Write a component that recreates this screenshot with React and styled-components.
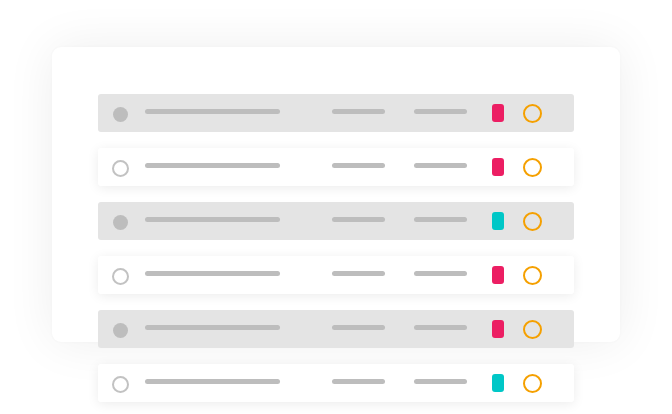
import React from 'react'
import styled, { createGlobalStyle } from 'styled-components'

const rows = [
    { filled: true, tag: '#ec1e63' },
    { filled: false, tag: '#ec1e63' },
    { filled: true, tag: '#00c7c7' },
    { filled: false, tag: '#ec1e63' },
    { filled: true, tag: '#ec1e63' },
    { filled: false, tag: '#00c7c7' },
]

function App() {
    return (
        <Page>
            <GlobalStyle />
            <Card>
                <List>
                    {rows.map((row, i) => (
                        <Row key={i} $filled={row.filled}>
                            <Dot $filled={row.filled} />
                            <Bar $w={135} $ml={17} />
                            <Bar $w={53} $ml={52} />
                            <Bar $w={53} $ml={29} />
                            <Tag $color={row.tag} />
                            <Ring />
                        </Row>
                    ))}
                </List>
            </Card>
        </Page>
    )
}

export default App

const GlobalStyle = createGlobalStyle`
    html, body {
        margin: 0;
        padding: 0;
        background: #ffffff;
        font-family: "Liberation Sans", Arial, sans-serif;
    }
`

const Page = styled.div`
    width: 672px;
    height: 414px;
    overflow: hidden;
    padding: 47px 0 0 52px;
    box-sizing: border-box;
`

const Card = styled.div`
    width: 568px;
    height: 295px;
    background: #ffffff;
    border-radius: 9px;
    box-shadow: 0 0 50px rgba(0, 0, 0, 0.07), 0 0 3px rgba(0, 0, 0, 0.03);
`

const List = styled.div`
    display: flex;
    flex-direction: column;
    gap: 16px;
    padding: 47px 0 0 46px;
`

const Row = styled.div`
    width: 476px;
    height: 38px;
    box-sizing: border-box;
    display: flex;
    align-items: center;
    padding-left: 15px;
    border-radius: 3px;
    background: ${p => (p.$filled ? '#e4e4e4' : '#ffffff')};
    box-shadow: ${p => (p.$filled ? 'none' : '0 2px 12px rgba(0, 0, 0, 0.08)')};
`

const Dot = styled.div`
    width: 15px;
    height: 15px;
    border-radius: 50%;
    box-sizing: border-box;
    flex-shrink: 0;
    background: #bdbdbd;
    margin-top: 2px;

    ${p => !p.$filled && `
        width: 17px;
        height: 17px;
        margin: 2px -1px 0;
        background: transparent;
        border: 2px solid #c2c2c2;
    `}
`

const Bar = styled.div`
    width: ${p => p.$w}px;
    height: 5px;
    margin-left: ${p => p.$ml}px;
    margin-top: -3px;
    border-radius: 3px;
    background: #bdbdbd;
    flex-shrink: 0;
`

const Tag = styled.div`
    width: 12px;
    height: 18px;
    margin-left: 25px;
    border-radius: 3px;
    background: ${p => p.$color};
    flex-shrink: 0;
`

const Ring = styled.div`
    width: 19px;
    height: 19px;
    margin-left: 19px;
    border-radius: 50%;
    box-sizing: border-box;
    border: 2px solid #f5a000;
    flex-shrink: 0;
`
